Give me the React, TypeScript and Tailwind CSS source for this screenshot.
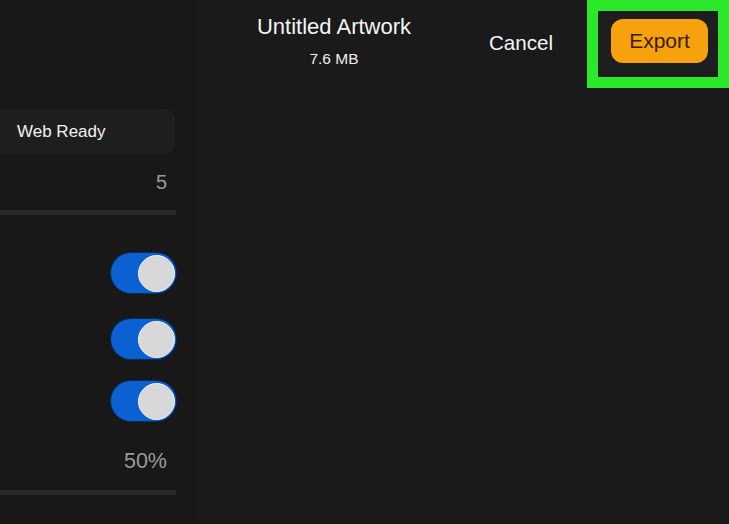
import React from "react";

function Toggle({ mt }: { mt: string }) {
  return (
    <div className={`${mt} flex w-[176px] justify-end`}>
      <div className="flex h-[40px] w-[65px] items-center justify-end rounded-full bg-[#0b60d2] pr-[1px] shadow-[0_0_0_1px_#0a2a5a]">
        <div className="h-[37px] w-[37px] rounded-full border border-[#eef2fb] bg-[#d8d8d8]" />
      </div>
    </div>
  );
}

export default function App() {
  return (
    <div
      className="flex h-[524px] w-[729px] overflow-hidden bg-[#1a1a1a]"
      style={{ fontFamily: '"Liberation Sans", Arial, sans-serif' }}
    >
      <div className="flex w-[199px] shrink-0 flex-col bg-[#181818]">
        <div className="mt-[109px] flex h-[45px] w-[175px] items-center rounded-r-[10px] bg-[#1e1e1e] pl-[17px] text-[17px] text-[#f2f2f2]">
          Web Ready
        </div>
        <div className="mt-[16px] w-[167px] text-right text-[20px] leading-[24px] text-[#9a9a9a]">5</div>
        <div className="mt-[16px] h-[5px] w-[176px] bg-[#2a2a2a]" />
        <Toggle mt="mt-[38px]" />
        <Toggle mt="mt-[26px]" />
        <Toggle mt="mt-[22px]" />
        <div className="mt-[28px] w-[167px] text-right text-[21.5px] leading-[24px] text-[#9a9a9a]">50%</div>
        <div className="mt-[17px] h-[5px] w-[176px] bg-[#2a2a2a]" />
      </div>
      <div className="flex flex-1 flex-col">
        <div className="flex items-start">
          <div className="ml-[55px] flex w-[160px] flex-col items-center">
            <div className="mt-[14px] whitespace-nowrap text-[22px] leading-[26px] text-[#f4f4f4]">Untitled Artwork</div>
            <div className="mt-[9px] text-[15.5px] leading-[20px] text-[#eeeeee]">7.6 MB</div>
          </div>
          <div className="ml-[75px] mt-[31px] text-[20.6px] leading-[24px] text-[#f4f4f4]">Cancel</div>
          <div className="ml-auto h-[88px] w-[142px] shrink-0 border-[11px] border-[#2ce82a] bg-[#1e1e1e] pl-[13px] pt-[8px]">
            <div className="flex h-[44px] w-[97px] items-center justify-center rounded-[12px] bg-[#f7a10f] text-[21px] text-[#3a1d02]">
              Export
            </div>
          </div>
        </div>
      </div>
    </div>
  );
}
